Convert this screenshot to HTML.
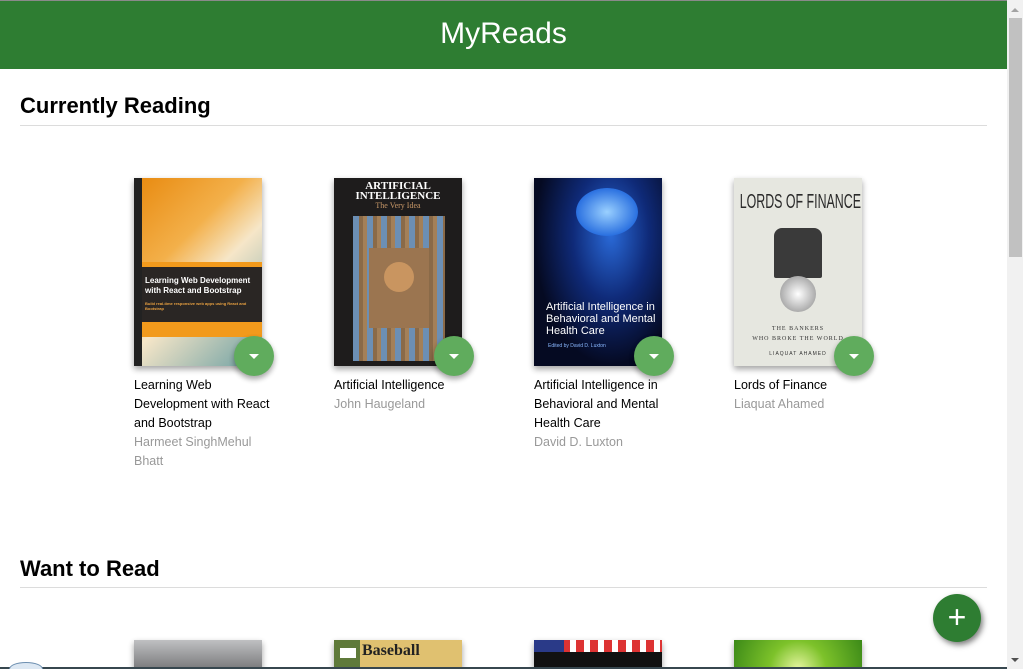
<!DOCTYPE html>
<html><head><meta charset="utf-8"><style>
*{margin:0;padding:0;box-sizing:border-box}
html,body{width:1023px;height:669px;overflow:hidden;background:#fff;font-family:"Liberation Sans",Arial,sans-serif}
#w{position:relative;width:1023px;height:669px;overflow:hidden}
.top{position:absolute;left:0;top:0;width:1007px;height:1px;background:#8a8a8a}
.hdr{position:absolute;left:0;top:1px;width:1007px;height:68px;background:#2e7d32;color:#fff;font-size:30px;text-align:center;line-height:66px}
h2{position:absolute;left:20px;font-size:22px;font-weight:bold;color:#000}
.line{position:absolute;left:20px;width:967px;height:1px;background:#dcdcdc}
.book{position:absolute;width:140px}
.cover{position:absolute;left:0;top:0;width:128px;height:188px;box-shadow:0 3px 6px rgba(0,0,0,.16),0 3px 6px rgba(0,0,0,.23);overflow:hidden}
.btn{position:absolute;left:100px;top:158px;width:40px;height:40px;border-radius:50%;background:#60ac5d;box-shadow:0 3px 6px rgba(0,0,0,.16),0 3px 6px rgba(0,0,0,.23)}
.btn:after{content:"";position:absolute;left:15px;top:18px;border-left:5px solid transparent;border-right:5px solid transparent;border-top:5px solid #fff}
.t{position:absolute;top:198px;left:0;width:140px;font-size:12.5px;line-height:19px;color:#000}
.a{color:#999}
.sb{position:absolute;left:1007px;top:0;width:16px;height:669px;background:#f1f1f1}
.thumb{position:absolute;left:1009px;top:18px;width:13px;height:239px;background:#c1c1c1}
.add{position:absolute;left:933px;top:594px;width:48px;height:48px;border-radius:50%;background:#2e7d32;box-shadow:2px 3px 6px rgba(0,0,0,.5);color:#fff;font-size:32px;text-align:center;line-height:46px}
</style></head><body><div id="w">
<div class="top"></div>
<div class="hdr">MyReads</div>
<h2 style="top:93px">Currently Reading</h2>
<div class="line" style="top:125px"></div>

<div class="book" style="left:134px;top:178px">
 <div class="cover" style="background:linear-gradient(135deg,#e8890e 0%,#f3b04a 35%,#f6e6c8 55%,#6a9ea2 100%)">
  <div style="position:absolute;left:0;top:0;width:8px;height:188px;background:#222"></div>
  <div style="position:absolute;left:8px;top:84px;width:120px;height:5px;background:#f29a1c"></div>
  <div style="position:absolute;left:8px;top:89px;width:120px;height:55px;background:#2a2624;color:#fff;font-size:8px;font-weight:bold;padding:9px 3px;line-height:10px">Learning Web Development with React and Bootstrap<div style="color:#e8a040;font-size:4px;line-height:5px;margin-top:5px">Build real-time responsive web apps using React and Bootstrap</div></div>
  <div style="position:absolute;left:8px;top:144px;width:120px;height:15px;background:#f29a1c"></div>
 </div>
 <div class="btn"></div>
 <div class="t">Learning Web Development with React and Bootstrap<div class="a">Harmeet SinghMehul Bhatt</div></div>
</div>

<div class="book" style="left:334px;top:178px">
 <div class="cover" style="background:#1e1c1c">
  <div style="color:#fff;font-family:'Liberation Serif',serif;font-weight:bold;font-size:11px;line-height:10px;text-align:center;margin-top:3px">ARTIFICIAL<br>INTELLIGENCE</div>
  <div style="color:#c89868;font-family:'Liberation Serif',serif;font-size:8px;text-align:center">The Very Idea</div>
  <div style="position:absolute;left:19px;top:38px;width:92px;height:145px;background:repeating-linear-gradient(90deg,#6c8fb4 0 6px,#8a6a48 6px 10px,#a48058 10px 14px)"></div>
  <div style="position:absolute;left:35px;top:70px;width:60px;height:80px;background:#9b7550"></div>
  <div style="position:absolute;left:50px;top:84px;width:30px;height:30px;border-radius:50%;background:#c99560"></div>
 </div>
 <div class="btn"></div>
 <div class="t">Artificial Intelligence<div class="a">John Haugeland</div></div>
</div>

<div class="book" style="left:534px;top:178px">
 <div class="cover" style="background:radial-gradient(ellipse at 60% 30%,#2a6ad8 0%,#0f2a78 35%,#050a22 70%)">
  <div style="position:absolute;left:42px;top:10px;width:62px;height:48px;border-radius:50%;background:radial-gradient(#9ad0ff,#2a70e0 70%,transparent 72%)"></div>
  <div style="position:absolute;left:12px;top:123px;width:112px;color:#fff;font-size:11px;line-height:12px">Artificial Intelligence in Behavioral and Mental Health Care</div>
  <div style="position:absolute;left:14px;top:165px;color:#8ab8ff;font-size:5px">Edited by David D. Luxton</div>
 </div>
 <div class="btn"></div>
 <div class="t">Artificial Intelligence in Behavioral and Mental Health Care<div class="a">David D. Luxton</div></div>
</div>

<div class="book" style="left:734px;top:178px">
 <div class="cover" style="background:#e6e7e0">
  <div style="position:absolute;left:-30px;top:13px;width:188px;text-align:center;font-size:20px;color:#2a2a2a;transform:scaleX(.62);white-space:nowrap">LORDS OF FINANCE</div>
  <div style="position:absolute;left:40px;top:50px;width:48px;height:50px;background:#3a3a3a;border-radius:8px 8px 2px 2px"></div>
  <div style="position:absolute;left:46px;top:98px;width:36px;height:36px;border-radius:50%;background:radial-gradient(#fff,#888)"></div>
  <div style="position:absolute;left:0;top:146px;width:128px;text-align:center;font-family:'Liberation Serif',serif;font-size:6px;line-height:10px;color:#333;letter-spacing:1px;white-space:nowrap">THE BANKERS<br>WHO BROKE THE WORLD</div>
  <div style="position:absolute;left:0;top:173px;width:128px;text-align:center;font-size:5px;color:#333;letter-spacing:1px">LIAQUAT AHAMED</div>
 </div>
 <div class="btn"></div>
 <div class="t">Lords of Finance<div class="a">Liaquat Ahamed</div></div>
</div>

<h2 style="top:556px">Want to Read</h2>
<div class="line" style="top:587px"></div>

<div class="cover" style="left:134px;top:640px;height:29px;background:linear-gradient(#bfc0c2,#7a7a7c);position:absolute"></div>
<div class="cover" style="left:334px;top:640px;height:29px;position:absolute;background:#e0c170">
 <div style="position:absolute;left:0;top:0;width:26px;height:40px;background:#5f7a3a"></div>
 <div style="position:absolute;left:6px;top:8px;width:16px;height:10px;background:#fff"></div>
 <div style="position:absolute;left:28px;top:2px;font-family:'Liberation Serif',serif;font-weight:bold;font-size:16px;color:#222">Baseball</div>
</div>
<div class="cover" style="left:534px;top:640px;height:29px;position:absolute;background:repeating-linear-gradient(90deg,#d33 0 8px,#fff 8px 14px)">
 <div style="position:absolute;left:0;top:0;width:30px;height:12px;background:#2a3a88"></div>
 <div style="position:absolute;left:0;top:12px;width:128px;height:20px;background:#111"></div>
</div>
<div class="cover" style="left:734px;top:640px;height:29px;position:absolute;background:radial-gradient(circle at 50% 100%,#e6f5a0,#7dc22a 40%,#3c8a18)"></div>

<div style="position:absolute;left:0;top:667px;width:1007px;height:2px;background:#37474f"></div>
<div style="position:absolute;left:9px;top:662px;width:34px;height:14px;border-radius:50%;border:1px solid #6d8fb0;background:#dde8f3"></div>

<div class="add">+</div>
<div class="sb"></div>
<div class="thumb"></div>
<div style="position:absolute;left:1011px;top:8px;border-left:4px solid transparent;border-right:4px solid transparent;border-bottom:4px solid #a3a3a3"></div>
<div style="position:absolute;left:1011px;top:658px;border-left:4px solid transparent;border-right:4px solid transparent;border-top:4px solid #505050"></div>
</div></body></html>
